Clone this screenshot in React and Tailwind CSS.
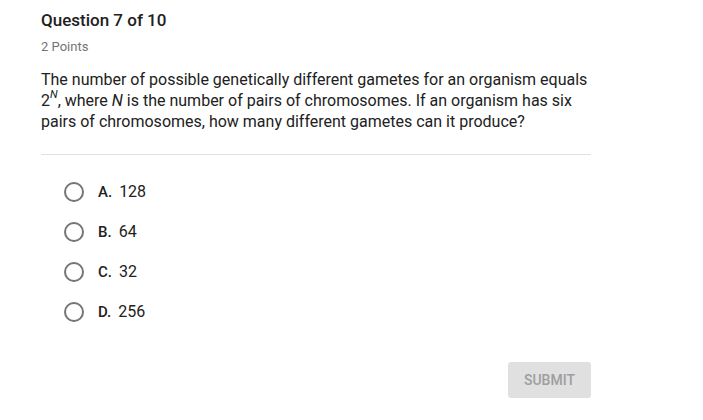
import React from "react";

const options = [
  { letter: "A.", value: "128" },
  { letter: "B.", value: "64" },
  { letter: "C.", value: "32" },
  { letter: "D.", value: "256" },
];

export default function App() {
  return (
    <div className="w-[703px] h-[420px] bg-white font-['Roboto',sans-serif] text-[#212121]">
      <div className="w-[550px] ml-[41px] pt-[9px]">
        {/* Header */}
        <h1 className="text-[17px] font-medium leading-[23px] text-[#212121]">Question 7 of 10</h1>
        <p className="text-[13px] leading-[18px] mt-[6px] text-[#757575]">2 Points</p>

        {/* Question */}
        <p className="text-[16px] leading-[21px] mt-[13px] text-[#212121]">
          The number of possible genetically different gametes for an organism equals 2
          <span className="inline-block align-top italic text-[11px] leading-[11px] -mt-[1px]">N</span>, where{" "}
          <span className="italic">N</span> is the number of pairs of chromosomes. If an organism has six pairs of
          chromosomes, how many different gametes can it produce?
        </p>

        <div className="border-t border-[#e0e0e0] mt-[22px]" />

        {/* Options */}
        <div className="flex flex-col gap-[20px] mt-[27px] pl-[23px]">
          {options.map((o) => (
            <div key={o.letter} className="flex items-center h-[20px]">
              <span className="w-[20px] h-[20px] rounded-full border-2 border-[#757575] shrink-0" />
              <span className="ml-[14px] text-[15px] font-medium text-[#212121]">{o.letter}</span>
              <span className="ml-[7px] text-[16px] text-[#212121]">{o.value}</span>
            </div>
          ))}
        </div>

        {/* Submit */}
        <div className="flex justify-end mt-[40px]">
          <button className="w-[83px] h-[36px] rounded-[3px] bg-[#e0e0e0] text-[#9e9e9e] text-[14px] font-medium">
            SUBMIT
          </button>
        </div>
      </div>
    </div>
  );
}
